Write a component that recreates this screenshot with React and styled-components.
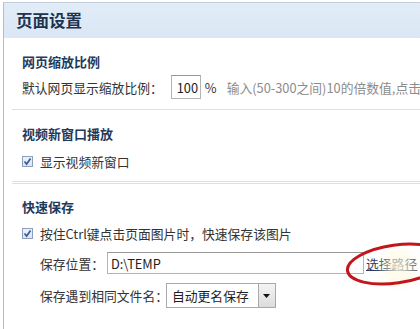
import React from 'react';
import styled, { createGlobalStyle } from 'styled-components';

const Global = createGlobalStyle`
  html, body { margin: 0; padding: 0; background: #fff; overflow: hidden; }
  body { font-family: "Microsoft YaHei", "Noto Sans CJK SC", "Noto Sans", sans-serif; color: #2b2b2b; }
`;

const Frame = styled.div`
  position: relative;
  width: 417px;
  height: 327px;
  margin: 2px 0 0 3px;
  border-top: 1px solid #c3cfdf;
  border-left: 1px solid #aebfd6;
  overflow: hidden;
`;

const Header = styled.div`
  height: 35px;
  display: flex;
  align-items: center;
  padding-left: 12px;
  background: linear-gradient(#e1ecf7, #dae7f4);
`;

const Title = styled.h1`
  margin: 0;
  font-size: 16.5px;
  font-weight: 700;
  color: #1d3350;
  line-height: 1;
`;

const Content = styled.div`
  padding-left: 8px;
`;

const Section = styled.section`
  padding: ${(p) => p.$pt}px 0 ${(p) => p.$pb}px 10px;
`;

const Heading = styled.h2`
  margin: 0;
  height: 20px;
  line-height: 20px;
  font-size: 13px;
  font-weight: 700;
  color: #1f3a5c;
`;

const Row = styled.div`
  display: flex;
  align-items: center;
  height: ${(p) => p.$h || 20}px;
  margin-top: ${(p) => p.$mt || 0}px;
  padding-left: ${(p) => p.$indent || 0}px;
  font-size: 12.8px;
  white-space: nowrap;
`;

const Label = styled.span`
  color: #333;
`;

const TextBox = styled.div`
  box-sizing: border-box;
  width: ${(p) => p.$w}px;
  height: ${(p) => p.$h}px;
  margin-left: ${(p) => p.$ml}px;
  border: 1px solid #b4b4b4;
  border-top-color: #999;
  display: flex;
  align-items: center;
  padding-left: ${(p) => p.$pl}px;
  font-size: 12.8px;
  color: #1e1e1e;
  background: #fff;
`;

const Unit = styled.span`
  margin-left: 4px;
  color: #333;
`;

const Hint = styled.span`
  margin-left: 10px;
  color: #8c8c8c;
`;

const Divider = styled.div`
  height: ${(p) => (p.$double ? 1 : 0)}px;
  border-top: 1px solid #dcdfe7;
  border-bottom: ${(p) => (p.$double ? '1px solid #dcdfe7' : 'none')};
`;

const Check = styled.span`
  box-sizing: border-box;
  width: 11px;
  height: 11px;
  border: 1px solid #8d9fb9;
  background: linear-gradient(#eef1f6, #dfe4ec);
  display: inline-flex;
  align-items: center;
  justify-content: center;
  margin-right: 7px;
`;

const Link = styled.a`
  margin-left: 2px;
  color: #2c3c5e;
  text-decoration: underline;
  cursor: pointer;
`;

const Select = styled.div`
  box-sizing: border-box;
  width: 110px;
  height: 25px;
  margin-left: -2px;
  border: 1px solid #a8a8a8;
  display: flex;
  align-items: stretch;
  background: #fff;
`;

const SelectText = styled.span`
  flex: 1;
  display: flex;
  align-items: center;
  padding-left: 5px;
  color: #1e1e1e;
`;

const SelectButton = styled.span`
  width: 16px;
  border-left: 1px solid #a8a8a8;
  background: linear-gradient(#f4f4f4, #dcdcdc);
  display: flex;
  align-items: center;
  justify-content: center;
`;

const Annotation = styled.svg`
  position: absolute;
  left: 338px;
  top: 234px;
  overflow: visible;
  pointer-events: none;
`;

const Smudge = styled.div`
  position: absolute;
  left: 372px;
  top: 240px;
  width: 46px;
  height: 50px;
  border-radius: 50%;
  background: radial-gradient(closest-side, rgba(255, 250, 226, 0.85), rgba(255, 248, 220, 0.4) 60%, rgba(255, 255, 255, 0));
  pointer-events: none;
`;

function CheckBox() {
  return (
    <Check>
      <svg width="9" height="9" viewBox="0 0 9 9">
        <path d="M1.5 4.5 L3.6 7 L7.6 1.5" fill="none" stroke="#3b5b9e" strokeWidth="1.7" />
      </svg>
    </Check>
  );
}

export default function App() {
  return (
    <>
      <Global />
      <Frame>
        <Header>
          <Title>页面设置</Title>
        </Header>
        <Content>
          <Section $pt={14} $pb={9}>
            <Heading>网页缩放比例</Heading>
            <Row $h={26} $mt={2}>
              <Label>默认网页显示缩放比例：</Label>
              <TextBox $w={34} $h={24} $ml={8} $pl={5}>100</TextBox>
              <Unit>%</Unit>
              <Hint>输入(50-300之间)10的倍数值,点击</Hint>
            </Row>
          </Section>
          <Divider />
          <Section $pt={14} $pb={10}>
            <Heading>视频新窗口播放</Heading>
            <Row $mt={7}>
              <CheckBox />
              <Label>显示视频新窗口</Label>
            </Row>
          </Section>
          <Divider $double />
          <Section $pt={13} $pb={0}>
            <Heading>快速保存</Heading>
            <Row $mt={6}>
              <CheckBox />
              <Label>按住Ctrl键点击页面图片时，快速保存该图片</Label>
            </Row>
            <Row $h={22} $mt={9} $indent={18}>
              <Label>保存位置：</Label>
              <TextBox $w={257} $h={22} $ml={3} $pl={3}>D:\TEMP</TextBox>
              <Link>选择路径</Link>
            </Row>
            <Row $h={25} $mt={9} $indent={18}>
              <Label>保存遇到相同文件名：</Label>
              <Select>
                <SelectText>自动更名保存</SelectText>
                <SelectButton>
                  <svg width="7" height="4" viewBox="0 0 7 4">
                    <path d="M0 0 H7 L3.5 4 Z" fill="#111" />
                  </svg>
                </SelectButton>
              </Select>
            </Row>
          </Section>
        </Content>
        <Smudge />
        <Annotation width="90" height="56" viewBox="0 0 90 56">
          <ellipse cx="54" cy="27" rx="49" ry="19" transform="rotate(-8 54 27)" fill="none" stroke="#c3161c" strokeWidth="3" />
        </Annotation>
      </Frame>
    </>
  );
}
